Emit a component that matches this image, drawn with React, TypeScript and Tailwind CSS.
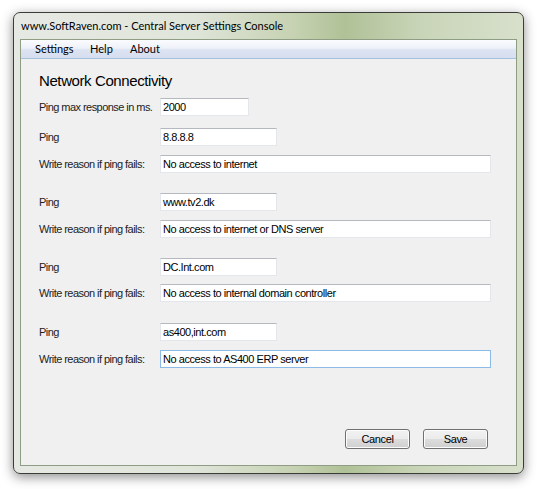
import React from "react";

type Row = { label: string; value: string; wide?: boolean; short?: boolean; focus?: boolean; mt: string };

const rows: Row[] = [
  { label: "Ping max response in ms.", value: "2000", short: true, mt: "mt-[8px]" },
  { label: "Ping", value: "8.8.8.8", mt: "mt-[12px]" },
  { label: "Write reason if ping fails:", value: "No access to internet", wide: true, mt: "mt-[9px]" },
  { label: "Ping", value: "www.tv2.dk", mt: "mt-[20px]" },
  { label: "Write reason if ping fails:", value: "No access to internet or DNS server", wide: true, mt: "mt-[9px]" },
  { label: "Ping", value: "DC.Int.com", mt: "mt-[20px]" },
  { label: "Write reason if ping fails:", value: "No access to internal domain controller", wide: true, mt: "mt-[8px]" },
  { label: "Ping", value: "as400,int.com", mt: "mt-[21px]" },
  { label: "Write reason if ping fails:", value: "No access to AS400 ERP server", wide: true, focus: true, mt: "mt-[9px]" },
];

function Field({ row }: { row: Row }) {
  const width = row.short ? "w-[89px]" : row.wide ? "w-[331px]" : "w-[117px]";
  return (
    <div className={`flex items-center ${row.mt}`}>
      <span className="w-[121px] shrink-0 whitespace-nowrap text-[11px] tracking-[-0.55px] text-[#222] leading-none">
        {row.label}
      </span>
      <div
        className={`${width} h-[18px] bg-white flex items-center px-[2px] text-[11px] tracking-[-0.45px] text-black whitespace-nowrap border ${
          row.focus ? "border-[#8dbbe8]" : "border-[#e3e6ea] border-t-[#b5b8bf]"
        }`}
      >
        {row.value}
      </div>
    </div>
  );
}

function WinButton({ label }: { label: string }) {
  return (
    <button className="w-[65px] h-[20px] rounded-[3px] border border-[#707070] bg-[linear-gradient(#f2f2f2_0%,#ebebeb_50%,#dddddd_50%,#cfcfcf_100%)] text-[11px] tracking-[-0.4px] text-black shadow-[inset_0_0_0_1px_#fcfcfc]">
      {label}
    </button>
  );
}

export default function App() {
  return (
    <div
      className="w-[540px] h-[489px] bg-white pt-[12px] pl-[13px]"
      style={{ fontFamily: '"Liberation Sans", Arial, sans-serif' }}
    >
      <div className="w-[511px] h-[462px] rounded-[7px] border border-[#3a3d38] bg-[linear-gradient(90deg,#e6e9e3_0%,#e0e5da_35%,#c6d2b2_55%,#b0c197_65%,#c9d5b8_80%,#d8e0cc_100%)] shadow-[0_3px_12px_rgba(0,0,0,0.45)] flex flex-col px-[6px] pb-[7px]">
        <div className="h-[26px] flex items-center pl-[1px] text-[11px] text-black" style={{ fontFamily: "Lato, sans-serif" }}>
          www.SoftRaven.com - Central Server Settings Console
        </div>
        <div className="flex-1 flex flex-col border border-[#8f9d84] bg-[#f0f0f0]">
          <div
            className="h-[19px] flex items-center pl-[14px] text-[11px] text-black bg-[linear-gradient(#fbfcfe_0%,#eef1f9_45%,#dce3f2_55%,#d6def0_100%)] border-b border-[#a5c2dc]"
            style={{ fontFamily: "Lato, sans-serif" }}
          >
            <span className="w-[55px]">Settings</span>
            <span className="w-[40px]">Help</span>
            <span>About</span>
          </div>
          <div className="flex-1 flex flex-col pl-[18px] pt-[13px]">
            <div className="text-[15px] leading-[18px] tracking-[-0.4px] text-black">Network Connectivity</div>
            {rows.map((r, i) => (
              <Field key={i} row={r} />
            ))}
            <div className="flex-1" />
            <div className="flex justify-end gap-[13px] pr-[28px] pb-[16px]">
              <WinButton label="Cancel" />
              <WinButton label="Save" />
            </div>
          </div>
        </div>
      </div>
    </div>
  );
}
